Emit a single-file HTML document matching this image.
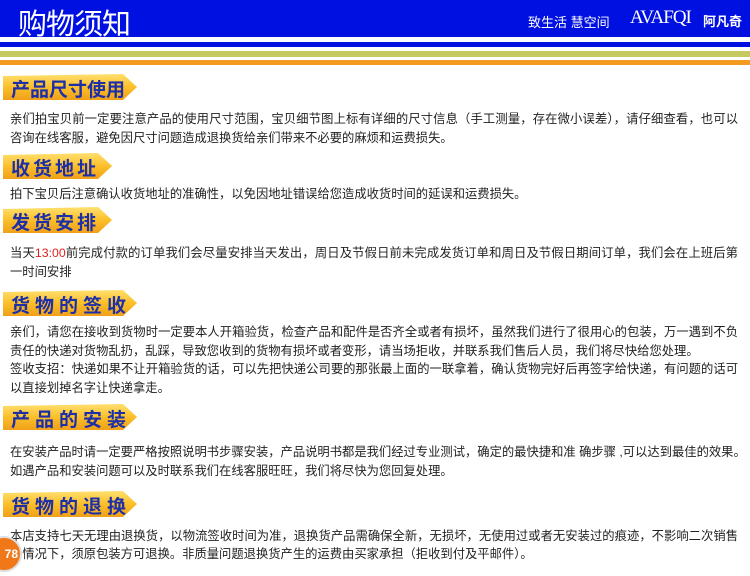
<!DOCTYPE html>
<html><head><meta charset="utf-8"><style>
body{margin:0;width:750px;height:576px;background:#fff;position:relative;overflow:hidden;font-family:"Liberation Sans","Noto Sans CJK SC",sans-serif;color:#222}
.a{position:absolute;white-space:nowrap}
.tab{position:absolute;left:3px;width:134px;height:26px;}
.tab svg{position:absolute;left:0;top:0}
.tab span{position:absolute;left:8px;top:1px;font-size:19px;font-weight:bold;color:#1c2fa8;letter-spacing:1px;white-space:nowrap}
.ln{position:absolute;left:10px;width:728px;font-size:12.3px;line-height:19px;white-space:nowrap}
.j{text-align:justify;text-align-last:justify}
</style></head><body>
<div class="a" style="left:0;top:0;width:750px;height:37px;background:#0010e0"></div>
<div class="a" style="left:18px;top:1px;font-size:29px;color:#fff;letter-spacing:-1px">购物须知</div>
<div class="a" style="left:528px;top:12px;font-size:13px;color:#fff">致生活 慧空间</div>
<div class="a" style="left:630px;top:7px;font-size:19px;color:#fff;font-family:'Liberation Serif',serif;letter-spacing:-1px">AVAFQI</div>
<div class="a" style="left:703px;top:11px;font-size:13px;color:#fff;font-weight:bold">阿凡奇</div>
<div class="a" style="left:0;top:42px;width:750px;height:5px;background:#0010e0"></div>
<div class="a" style="left:0;top:51px;width:750px;height:6px;background:#c6c860"></div>
<div class="a" style="left:0;top:60px;width:750px;height:5px;background:#f39a20"></div>

<svg width="0" height="0" style="position:absolute"><defs><linearGradient id="g" x1="0" y1="0" x2="0" y2="1"><stop offset="0" stop-color="#ffe070"/><stop offset="0.5" stop-color="#fbbf2a"/><stop offset="1" stop-color="#f0a018"/></linearGradient></defs></svg>

<div class="tab" style="top:74px"><svg width="134" height="26"><polygon points="0,2 120,0 134,13 120,26 0,26" fill="url(#g)"/></svg><span style="letter-spacing:0">产品尺寸使用</span></div>
<div class="ln j" style="top:110px">亲们拍宝贝前一定要注意产品的使用尺寸范围，宝贝细节图上标有详细的尺寸信息（手工测量，存在微小误差），请仔细查看，也可以</div>
<div class="ln" style="top:129px">咨询在线客服，避免因尺寸问题造成退换货给亲们带来不必要的麻烦和运费损失。</div>

<div class="tab" style="top:153px"><svg width="134" height="26"><polygon points="0,2 95,0 109,13 95,26 0,26" fill="url(#g)"/></svg><span style="letter-spacing:3px">收货地址</span></div>
<div class="ln" style="top:185px">拍下宝贝后注意确认收货地址的准确性，以免因地址错误给您造成收货时间的延误和运费损失。</div>

<div class="tab" style="top:207px"><svg width="134" height="26"><polygon points="0,2 95,0 109,13 95,26 0,26" fill="url(#g)"/></svg><span style="letter-spacing:3px">发货安排</span></div>
<div class="ln j" style="top:244px">当天<span style="color:#e02020">13:00</span>前完成付款的订单我们会尽量安排当天发出，周日及节假日前未完成发货订单和周日及节假日期间订单，我们会在上班后第</div>
<div class="ln" style="top:263px">一时间安排</div>

<div class="tab" style="top:290px"><svg width="134" height="26"><polygon points="0,2 120,0 134,13 120,26 0,26" fill="url(#g)"/></svg><span style="letter-spacing:5px">货物的签收</span></div>
<div class="ln j" style="top:323px">亲们，请您在接收到货物时一定要本人开箱验货，检查产品和配件是否齐全或者有损坏，虽然我们进行了很用心的包装，万一遇到不负</div>
<div class="ln" style="top:342px">责任的快递对货物乱扔，乱踩，导致您收到的货物有损坏或者变形，请当场拒收，并联系我们售后人员，我们将尽快给您处理。</div>
<div class="ln j" style="top:360px">签收支招：快递如果不让开箱验货的话，可以先把快递公司要的那张最上面的一联拿着，确认货物完好后再签字给快递，有问题的话可</div>
<div class="ln" style="top:379px">以直接划掉名字让快递拿走。</div>

<div class="tab" style="top:404px"><svg width="134" height="26"><polygon points="0,2 120,0 134,13 120,26 0,26" fill="url(#g)"/></svg><span style="letter-spacing:5px">产品的安装</span></div>
<div class="ln j" style="top:443px;width:725px">在安装产品时请一定要严格按照说明书步骤安装，产品说明书都是我们经过专业测试，确定的最快捷和准 确步骤 ,可以达到最佳的效果。</div>
<div class="ln" style="top:462px">如遇产品和安装问题可以及时联系我们在线客服旺旺，我们将尽快为您回复处理。</div>

<div class="tab" style="top:491px"><svg width="134" height="26"><polygon points="0,2 120,0 134,13 120,26 0,26" fill="url(#g)"/></svg><span style="letter-spacing:5px">货物的退换</span></div>
<div class="ln j" style="top:527px">本店支持七天无理由退换货，以物流签收时间为准，退换货产品需确保全新，无损坏，无使用过或者无安装过的痕迹，不影响二次销售</div>
<div class="ln" style="top:545px">的情况下，须原包装方可退换。非质量问题退换货产生的运费由买家承担（拒收到付及平邮件）。</div>
<div class="a" style="left:-14px;top:536px;width:32px;height:32px;border-radius:50%;background:#f07818;border:2px solid #ddd;color:#fff;font-size:12px;font-weight:bold;line-height:32px;text-align:right;box-sizing:content-box"><span style="padding-right:2px">78</span></div>
</body></html>
